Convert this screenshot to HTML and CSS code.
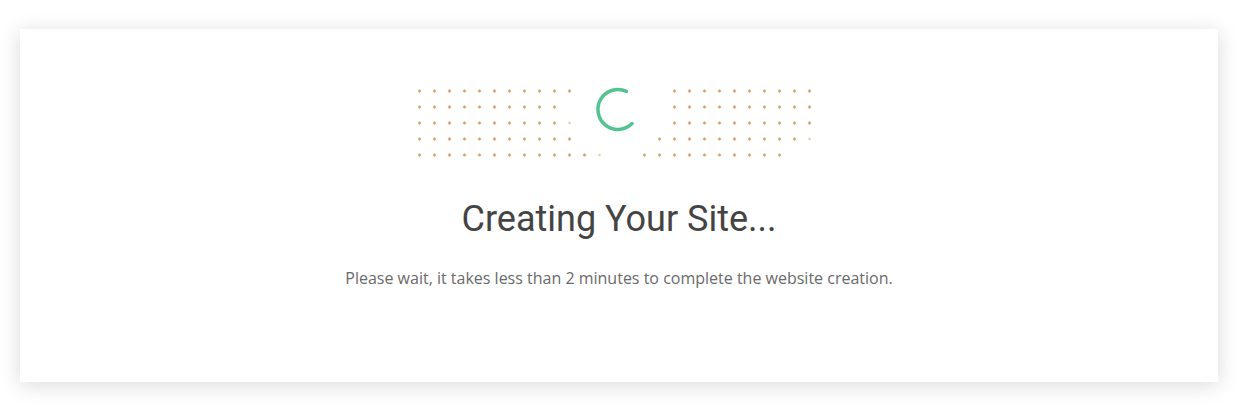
FILE: index.html
```html
<!DOCTYPE html>
<html lang="en">
<head>
<meta charset="utf-8">
<title>Creating Your Site</title>
<link rel="stylesheet" href="styles.css">
</head>
<body>
<main class="card">
  <svg class="loader" width="410" height="80" viewBox="414 83 410 80" aria-hidden="true">
    <g id="dots" fill="#d7a26a"></g>
    <path class="spinner" d="M632.1 123.6 A20 20 0 1 1 626.5 91.4"/>
  </svg>
  <h1 class="title">Creating Your Site...</h1>
  <p class="subtitle">Please wait, it takes less than 2 minutes to complete the website creation.</p>
</main>
<script src="script.js"></script>
</body>
</html>
```
FILE: styles.css
```css
html, body {
  margin: 0;
  padding: 0;
  background: #ffffff;
}
body {
  padding: 29px 22px 29px 20px;
  font-family: "Open Sans", "Liberation Sans", sans-serif;
}
.card {
  background: #ffffff;
  height: 353px;
  box-sizing: border-box;
  padding-top: 54px;
  display: flex;
  flex-direction: column;
  align-items: center;
  box-shadow: 0 3px 20px rgba(0, 0, 0, 0.15);
}
.loader {
  display: block;
  flex: none;
}
.spinner {
  fill: none;
  stroke: #52c491;
  stroke-width: 3.5;
  stroke-linecap: round;
}
.title {
  margin: 35px 0 0;
  font-family: Roboto, "Liberation Sans", sans-serif;
  font-weight: 400;
  font-size: 36px;
  line-height: 42px;
  color: #444444;
}
.subtitle {
  margin: 27px 0 0;
  font-size: 16px;
  line-height: 22px;
  color: #6a6a6a;
}
```
FILE: script.js
```js
(function () {
  var g = document.getElementById('dots');
  var ns = 'http://www.w3.org/2000/svg';
  var rows = [91, 107, 123, 139, 155];
  var visible = [
    [[0, 10], [17, 26]],
    [[0, 9], [17, 26]],
    [[0, 9], [17, 26]],
    [[0, 10], [16, 25]],
    [[0, 11], [15, 24]]
  ];
  var faint = [[2, 10], [3, 26], [4, 12]];
  function dot(k, r, op) {
    var x = 419.5 + 15 * k, y = rows[r];
    var a = document.createElementNS(ns, 'rect');
    a.setAttribute('x', x - 1.6); a.setAttribute('y', y - 0.7);
    a.setAttribute('width', 3.2); a.setAttribute('height', 1.4);
    var b = document.createElementNS(ns, 'rect');
    b.setAttribute('x', x - 0.7); b.setAttribute('y', y - 1.6);
    b.setAttribute('width', 1.4); b.setAttribute('height', 3.2);
    if (op) { a.setAttribute('opacity', op); b.setAttribute('opacity', op); }
    g.appendChild(a); g.appendChild(b);
  }
  visible.forEach(function (ranges, r) {
    ranges.forEach(function (rg) {
      for (var k = rg[0]; k <= rg[1]; k++) dot(k, r);
    });
  });
  faint.forEach(function (f) { dot(f[1], f[0], 0.35); });
})();
```
